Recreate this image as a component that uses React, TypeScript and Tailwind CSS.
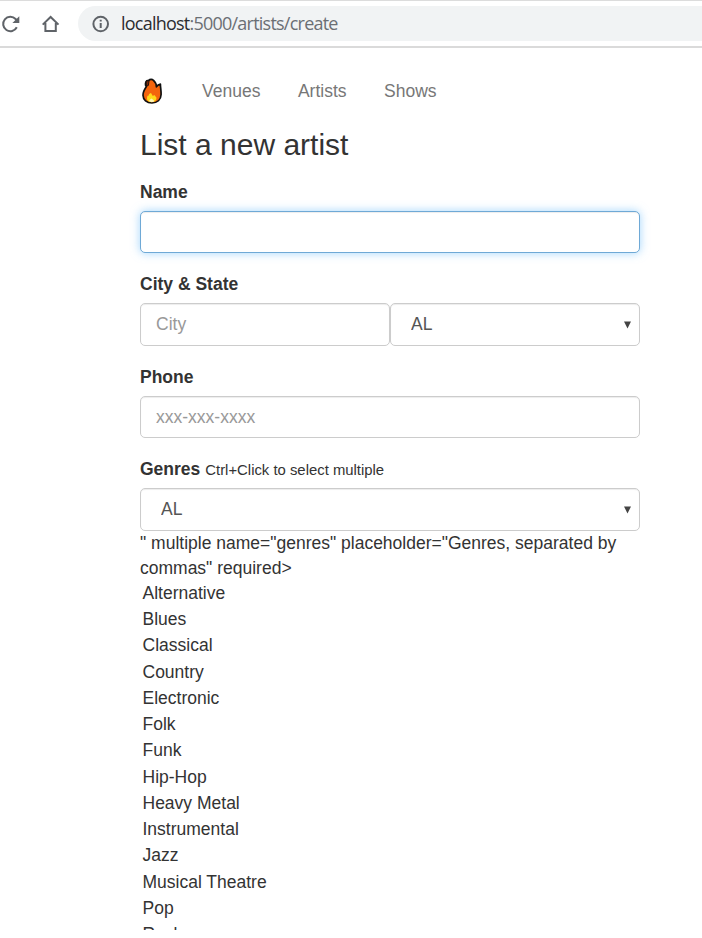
import React from "react";

const genres = [
  "Alternative",
  "Blues",
  "Classical",
  "Country",
  "Electronic",
  "Folk",
  "Funk",
  "Hip-Hop",
  "Heavy Metal",
  "Instrumental",
  "Jazz",
  "Musical Theatre",
  "Pop",
  "Rock",
];

const control =
  "block h-[42.5px] w-full rounded-[5px] border border-[#ccc] bg-white px-[15px] text-[17.5px] text-[#555] shadow-[inset_0_1px_1px_rgba(0,0,0,0.075)] outline-none placeholder:text-[#999]";

function Toolbar() {
  return (
    <header className="flex h-12 items-start border-t border-b-2 border-t-[#dcdcdc] border-b-[#dadada] bg-white">
      <div className="flex h-[45px] shrink-0 items-center">
        <svg className="h-6 w-[22px]" viewBox="0 0 22 24" fill="none" stroke="#5f6368" strokeWidth="2">
          <path d="M16.8 15.2A7.2 7.2 0 1 1 15.6 7L17.8 9.4" />
          <path d="M19.3 4.2V11.1H12.4Z" fill="#5f6368" stroke="none" />
        </svg>
        <svg className="ml-[18px] h-6 w-[22px]" viewBox="0 0 22 24" fill="none" stroke="#5f6368" strokeWidth="2">
          <path d="M2.7 12.6L10.6 5L18.5 12.6M5.4 11V19H15.8V11" />
        </svg>
      </div>
      <div className="mt-[5px] ml-4 flex h-[35px] flex-1 items-center rounded-l-full bg-[#f1f3f4] pl-[14px]">
        <svg className="h-[18px] w-[18px]" viewBox="0 0 18 18" fill="none" stroke="#5f6368" strokeWidth="2">
          <circle cx="8.7" cy="9" r="7.3" />
          <path d="M8.7 8V13M8.7 4.8V6.6" />
        </svg>
        <span className="ml-[11px] font-['Open_Sans','Noto_Sans',sans-serif] text-[18px] tracking-[-0.77px] whitespace-nowrap text-[#6b6f74]">
          <span className="text-[#2b2c30]">localhost</span>:5000/artists/create
        </span>
      </div>
    </header>
  );
}

function Flame() {
  return (
    <svg className="h-[27px] w-[24px]" viewBox="0 0 24 27">
      <path
        d="M8.7 2.4C10 1 12.2 1 13.3 2.2C15.4 4.2 16.5 6.5 16.4 8.8C17.2 7.6 18.5 6.4 20.4 6.2C20.4 9.2 21.2 12.5 21.1 16.5C20.9 21.8 17.3 25 12 25C6.7 25 3.1 21.8 3 17.2C2.9 13.8 5 10.8 6.4 8.6C4.9 7.1 5.3 4.3 6.7 2.9Z"
        fill="#f4640d"
        stroke="#111"
        strokeWidth="1.7"
        strokeLinejoin="round"
      />
      <path d="M6.2 3.2L9.1 2.4L8.4 7.4L6.5 8.2Z" fill="#7c260b" stroke="#111" strokeWidth="0.9" />
      <path
        d="M7 20.5C7 18.5 7.7 17 8.7 17.7C8.6 16 10.1 15 11.1 15C11.3 16.3 12.5 16.6 12.7 18C14.3 16.7 15.2 17.5 15.4 18.5C17 18.9 16.7 21.8 15.2 23C13.5 24.5 9.6 24.5 8 23C7.3 22.4 7 21.4 7 20.5Z"
        fill="#fed91b"
      />
      <path d="M9.2 23.3C9.2 21.8 10.6 21 11.7 20.6C12.2 21.7 14.5 22 14 23.4C12.8 24.3 10.5 24.3 9.2 23.3Z" fill="#fff5b8" />
    </svg>
  );
}

function StateSelect({ label }: { label: string }) {
  return (
    <div className="relative w-full">
      <select aria-label={label} className={control + " appearance-none pl-5"}>
        <option>AL</option>
      </select>
      <svg className="pointer-events-none absolute top-[17.75px] right-[9px] h-[8px] w-[7px]" viewBox="0 0 7 8">
        <path d="M0 0.5H7L3.5 7.5Z" fill="#444" />
      </svg>
    </div>
  );
}

function Field({ label, hint, children }: { label: string; hint?: string; children: React.ReactNode }) {
  return (
    <div className="mb-[18.75px]">
      <div className="mb-[6.25px] h-[25px] leading-[25px]">
        <label className="font-bold">{label}</label>
        {hint && <small className="ml-[5px] text-[14.875px]">{hint}</small>}
      </div>
      {children}
    </div>
  );
}

export default function App() {
  return (
    <div className="h-[938px] overflow-hidden bg-white font-['Liberation_Sans',Arial,sans-serif] text-[17.5px] leading-[25px] text-[#333]">
      <div className="h-[930px] overflow-hidden">
        <Toolbar />
        <main className="ml-[140px] w-[500px]">
          <nav className="flex h-[80px] items-start pt-[30px] text-[#777]">
            <div className="w-[62px]">
              <Flame />
            </div>
            <div className="flex gap-[37.5px] pt-[1px]">
              <a>Venues</a>
              <a>Artists</a>
              <a>Shows</a>
            </div>
          </nav>
          <h3 className="mb-[18.5px] h-[33px] text-[30px] leading-[33px] font-normal">List a new artist</h3>
          <form>
            <Field label="Name">
              <input
                aria-label="Name"
                className="block h-[42.5px] w-full rounded-[5px] border border-[#6fa9d6] bg-white px-[15px] text-[17.5px] shadow-[inset_0_1px_1px_rgba(0,0,0,0.075),0_0_10px_rgba(102,185,250,0.6)] outline-none"
              />
            </Field>
            <Field label="City & State">
              <div className="grid grid-cols-2">
                <input aria-label="City" placeholder="City" className={control} />
                <StateSelect label="State" />
              </div>
            </Field>
            <Field label="Phone">
              <input aria-label="Phone" placeholder="xxx-xxx-xxxx" className={control} />
            </Field>
            <Field label="Genres" hint="Ctrl+Click to select multiple">
              <StateSelect label="Genres" />
              <p>{'" multiple name="genres" placeholder="Genres, separated by commas" required>'}</p>
              <ul className="pl-[2.5px]">
                {genres.map((genre) => (
                  <li key={genre} className="h-[26.25px]">
                    {genre}
                  </li>
                ))}
              </ul>
            </Field>
          </form>
        </main>
      </div>
    </div>
  );
}
